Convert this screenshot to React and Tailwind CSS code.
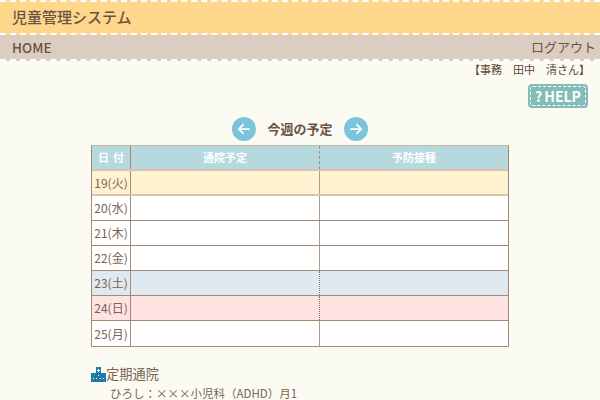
import { FaArrowLeft, FaArrowRight } from 'react-icons/fa6'

const rows = [
  { day: '19(火)', bg: 'bg-[#fff2d1]', line: 'border-b-2 border-[#d9c4ab]', sep: 'border-solid border-[#a89c8c]' },
  { day: '20(水)', bg: 'bg-white', line: 'border-b border-[#a58a73]', sep: 'border-solid border-[#a89c8c]' },
  { day: '21(木)', bg: 'bg-white', line: 'border-b border-[#a58a73]', sep: 'border-solid border-[#a89c8c]' },
  { day: '22(金)', bg: 'bg-white', line: 'border-b border-[#a58a73]', sep: 'border-solid border-[#a89c8c]' },
  { day: '23(土)', bg: 'bg-[#e0e9ef]', line: 'border-b border-[#a58a73]', sep: 'border-dotted border-[#8a7360]' },
  { day: '24(日)', bg: 'bg-[#ffe3e3]', line: 'border-b border-[#a58a73]', sep: 'border-dotted border-[#8a7360]' },
  { day: '25(月)', bg: 'bg-white', line: '', sep: 'border-solid border-[#a89c8c]' },
]

const RoundArrow = ({ children }) => (
  <span className="flex h-6 w-6 items-center justify-center rounded-full bg-[#7cc4dc] text-[14px] text-white">
    {children}
  </span>
)

const App = () => {
  return (
    <div className="h-[400px] w-[600px] overflow-hidden bg-[#fcfbf3] font-['Noto_Sans_CJK_JP',sans-serif] text-[#6b5344]">
      <div className="flex h-[35px] items-center border-y-2 border-dashed border-white bg-[#fed68c] px-3 pb-[1px] text-[15px] font-medium">
        児童管理システム
      </div>
      <div className="flex h-[26px] items-center justify-between border-b-2 border-dashed border-white bg-[#dccdc2] pl-3 pr-1 text-[13px]">
        <span className="text-[13.5px] font-medium">HOME</span>
        <span>ログアウト</span>
      </div>

      <div className="pr-[10px] text-right text-[11px] leading-[16px] text-[#5a4536]">
        【事務　田中　清さん】
      </div>
      <div className="mt-[7px] flex justify-end pr-[12px]">
        <div className="h-[24px] w-[60px] rounded bg-[#82bdb8] p-[2px]">
          <div className="flex h-full w-full items-center justify-center gap-[2px] rounded-[3px] border border-dashed border-white text-[14px] font-bold text-white">
            <span>?</span>
            <span>HELP</span>
          </div>
        </div>
      </div>

      <div className="mt-[9px] flex items-center justify-center gap-[8px]">
        <RoundArrow><FaArrowLeft /></RoundArrow>
        <span className="w-[72px] text-center text-[13px] font-bold">今週の予定</span>
        <RoundArrow><FaArrowRight /></RoundArrow>
      </div>

      <div className="mx-[91px] mt-[4px] w-[418px] border border-[#a58a73] border-t-[#c5b5a5] text-[12px]">
        <div className="grid h-[25px] grid-cols-[39px_189px_1fr] border-b-2 border-[#d9c4ab] bg-[#b5d9de] text-[11px] font-bold text-white">
          <div className="flex items-center justify-center gap-[4px] border-r border-[#a58a73]">
            <span>日</span>
            <span>付</span>
          </div>
          <div className="flex items-center justify-center border-r border-dashed border-[#a58a73]">通院予定</div>
          <div className="flex items-center justify-center">予防接種</div>
        </div>
        {rows.map((row) => (
          <div key={row.day} className={`grid h-[25px] grid-cols-[39px_189px_1fr] ${row.bg} ${row.line}`}>
            <div className="flex items-center justify-center border-r border-[#a58a73] text-[#7a6350]">{row.day}</div>
            <div className={`border-r ${row.sep}`} />
            <div />
          </div>
        ))}
      </div>

      <div className="ml-[91px] mt-[17px] flex items-center text-[13.25px] leading-[20px] text-[#7a6350]">
        <svg viewBox="0 0 15 15" className="h-[15px] w-[15px]">
          <path fill="#1f7ca8" d="M5 0h5v6h5v9H0V6h5z" />
          <path fill="#fff" d="M7 2h1v1h1v1H8v1H7V4H6V3h1zM2 11h1v1H2zM5 11h1v1H5zM9 11h1v1H9zM12 11h1v1h-1zM7 8h1v1H7z" />
        </svg>
        定期通院
      </div>
      <div className="ml-[110px] mt-[1px] text-[11.5px] leading-[16px] text-[#7a6350]">
        ひろし：×××小児科（ADHD）月1
      </div>
    </div>
  )
}

export default App
